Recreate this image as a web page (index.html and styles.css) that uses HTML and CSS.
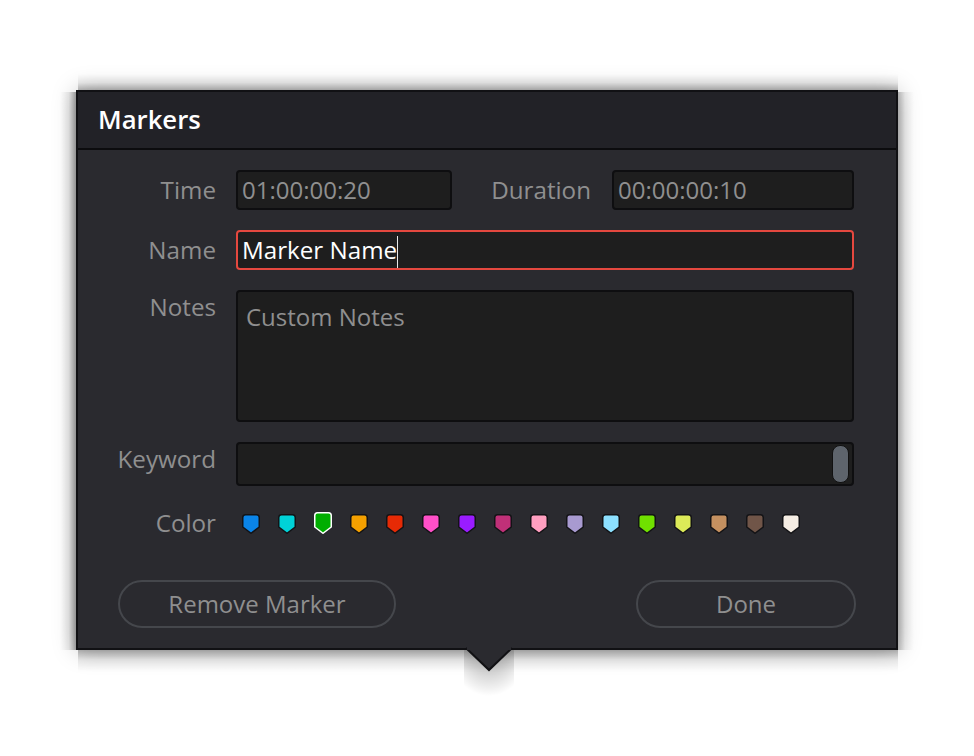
FILE: index.html
```html
<!DOCTYPE html>
<html lang="en">
<head>
<meta charset="UTF-8">
<meta name="viewport" content="width=device-width, initial-scale=1.0">
<title>Markers</title>
<link rel="stylesheet" href="styles.css">
</head>
<body>

<div class="shadow-box">
    <div class="dialog">
        <div class="dialog-title">Markers</div>
        <div class="dialog-body">
            <div class="row">
                <label class="row-label">Time</label>
                <div class="field field-time">01:00:00:20</div>
                <label class="duration-label">Duration</label>
                <div class="field field-duration">00:00:00:10</div>
            </div>
            <div class="row">
                <label class="row-label">Name</label>
                <div class="field field-active">Marker Name<span class="caret"></span></div>
            </div>
            <div class="row">
                <label class="row-label notes-label">Notes</label>
                <div class="field field-notes">Custom Notes</div>
            </div>
            <div class="row">
                <label class="row-label keyword-label">Keyword</label>
                <div class="field field-keyword"><span class="scroll-thumb"></span></div>
            </div>
            <div class="row color-row">
                <label class="row-label color-label">Color</label>
                <div class="swatches">
                    <svg class="swatch c-blue" viewBox="0 0 18 20"><path d="M3.5 .75H14.5Q17.25 .75 17.25 3.5V13L9 19.25L.75 13V3.5Q.75 .75 3.5 .75Z"/></svg>
                    <svg class="swatch c-cyan" viewBox="0 0 18 20"><path d="M3.5 .75H14.5Q17.25 .75 17.25 3.5V13L9 19.25L.75 13V3.5Q.75 .75 3.5 .75Z"/></svg>
                    <svg class="swatch c-green selected" viewBox="0 0 18 22"><path d="M3.5 .75H14.5Q17.25 .75 17.25 3.5V15L9 21.25L.75 15V3.5Q.75 .75 3.5 .75Z"/></svg>
                    <svg class="swatch c-orange" viewBox="0 0 18 20"><path d="M3.5 .75H14.5Q17.25 .75 17.25 3.5V13L9 19.25L.75 13V3.5Q.75 .75 3.5 .75Z"/></svg>
                    <svg class="swatch c-red" viewBox="0 0 18 20"><path d="M3.5 .75H14.5Q17.25 .75 17.25 3.5V13L9 19.25L.75 13V3.5Q.75 .75 3.5 .75Z"/></svg>
                    <svg class="swatch c-pink" viewBox="0 0 18 20"><path d="M3.5 .75H14.5Q17.25 .75 17.25 3.5V13L9 19.25L.75 13V3.5Q.75 .75 3.5 .75Z"/></svg>
                    <svg class="swatch c-purple" viewBox="0 0 18 20"><path d="M3.5 .75H14.5Q17.25 .75 17.25 3.5V13L9 19.25L.75 13V3.5Q.75 .75 3.5 .75Z"/></svg>
                    <svg class="swatch c-magenta" viewBox="0 0 18 20"><path d="M3.5 .75H14.5Q17.25 .75 17.25 3.5V13L9 19.25L.75 13V3.5Q.75 .75 3.5 .75Z"/></svg>
                    <svg class="swatch c-rose" viewBox="0 0 18 20"><path d="M3.5 .75H14.5Q17.25 .75 17.25 3.5V13L9 19.25L.75 13V3.5Q.75 .75 3.5 .75Z"/></svg>
                    <svg class="swatch c-lavender" viewBox="0 0 18 20"><path d="M3.5 .75H14.5Q17.25 .75 17.25 3.5V13L9 19.25L.75 13V3.5Q.75 .75 3.5 .75Z"/></svg>
                    <svg class="swatch c-sky" viewBox="0 0 18 20"><path d="M3.5 .75H14.5Q17.25 .75 17.25 3.5V13L9 19.25L.75 13V3.5Q.75 .75 3.5 .75Z"/></svg>
                    <svg class="swatch c-lime" viewBox="0 0 18 20"><path d="M3.5 .75H14.5Q17.25 .75 17.25 3.5V13L9 19.25L.75 13V3.5Q.75 .75 3.5 .75Z"/></svg>
                    <svg class="swatch c-yellow" viewBox="0 0 18 20"><path d="M3.5 .75H14.5Q17.25 .75 17.25 3.5V13L9 19.25L.75 13V3.5Q.75 .75 3.5 .75Z"/></svg>
                    <svg class="swatch c-tan" viewBox="0 0 18 20"><path d="M3.5 .75H14.5Q17.25 .75 17.25 3.5V13L9 19.25L.75 13V3.5Q.75 .75 3.5 .75Z"/></svg>
                    <svg class="swatch c-brown" viewBox="0 0 18 20"><path d="M3.5 .75H14.5Q17.25 .75 17.25 3.5V13L9 19.25L.75 13V3.5Q.75 .75 3.5 .75Z"/></svg>
                    <svg class="swatch c-cream" viewBox="0 0 18 20"><path d="M3.5 .75H14.5Q17.25 .75 17.25 3.5V13L9 19.25L.75 13V3.5Q.75 .75 3.5 .75Z"/></svg>
                </div>
            </div>
            <div class="buttons">
                <button class="btn btn-remove">Remove Marker</button>
                <button class="btn btn-done">Done</button>
            </div>
        </div>
        <svg class="arrow" viewBox="0 0 50 24"><path d="M2 -1L25 21L48 -1" fill="#2a2a2f" stroke="#111114" stroke-width="2"/><path d="M3 1H47V-3H3Z" fill="#2a2a2f"/></svg>
    </div>
</div>

</body>
</html>
```

FILE: styles.css
```css
body {
    font-family: "Open Sans", "Noto Sans", sans-serif;
    margin: 0;
    padding: 0;
    background-color: #fff;
}

/* darker strips along each edge, one more under the arrow; the soft corners come from the dialog's box-shadow */
.shadow-box {
    width: 822px;
    margin: 70px 0 0 56px;
    padding: 20px 20px 56px;
    background-image:
        radial-gradient(ellipse 40px 46px at 50% 0, rgba(0, 0, 0, 0.3), rgba(0, 0, 0, 0.17) 50%, rgba(0, 0, 0, 0)),
        linear-gradient(to top, rgba(0, 0, 0, 0.26), rgba(0, 0, 0, 0.07) 45%, rgba(0, 0, 0, 0)),
        linear-gradient(to left, rgba(0, 0, 0, 0.34), rgba(0, 0, 0, 0.08) 45%, rgba(0, 0, 0, 0)),
        linear-gradient(to right, rgba(0, 0, 0, 0.24), rgba(0, 0, 0, 0.06) 45%, rgba(0, 0, 0, 0)),
        linear-gradient(to bottom, rgba(0, 0, 0, 0.28), rgba(0, 0, 0, 0.08) 45%, rgba(0, 0, 0, 0));
    background-repeat: no-repeat;
    background-size: 50px 50px, 820px 16px, 16px 558px, 16px 558px, 820px 22px;
    background-position: 408px 580px, 22px 4px, 4px 22px, 842px 22px, 22px 580px;
}

.dialog {
    position: relative;
    box-sizing: border-box;
    width: 822px;
    height: 560px;
    background-color: #2a2a2f;
    border: 2px solid #111114;
    box-shadow: 0 0 22px rgba(0, 0, 0, 0.26);
}

.dialog-title {
    box-sizing: border-box;
    height: 58px;
    padding-left: 20px;
    line-height: 56px;
    font-size: 25.7px;
    font-weight: 600;
    color: #fff;
    background-color: #222227;
    border-bottom: 2px solid #0c0c0e;
}

.dialog-body {
    padding: 20px 42px 0 0;
}

.row {
    display: flex;
    margin-bottom: 20px;
}

.row-label {
    width: 138px;
    margin-right: 20px;
    text-align: right;
    font-size: 24.2px;
    line-height: 40px;
    color: #8f8f8f;
    flex-shrink: 0;
}

.duration-label {
    width: 139px;
    margin-right: 21px;
    text-align: right;
    font-size: 24.2px;
    line-height: 40px;
    color: #8f8f8f;
}

.notes-label {
    line-height: 34px;
}

.keyword-label {
    line-height: 34px;
}

.color-label {
    line-height: 34px;
}

.field {
    box-sizing: border-box;
    flex: 1;
    height: 40px;
    padding-left: 4px;
    font-size: 24px;
    line-height: 36px;
    color: #8f8f8f;
    background-color: #1e1e1e;
    border: 2px solid #0e0e10;
    border-radius: 4px;
}

.field-time {
    flex: none;
    width: 216px;
}

.field-duration {
    flex: none;
    width: 242px;
}

.field-active {
    font-size: 24.2px;
    color: #fff;
    border-color: #e5483f;
}

.caret {
    display: inline-block;
    width: 1px;
    height: 32px;
    vertical-align: -9px;
    background-color: #e8e8e8;
}

.field-notes {
    height: 132px;
    padding: 7px 0 0 8px;
}

.field-keyword {
    display: flex;
    justify-content: flex-end;
    height: 44px;
    padding: 0 3px 0 0;
}

.scroll-thumb {
    width: 17px;
    height: 38px;
    margin-top: 1px;
    box-sizing: border-box;
    background-color: #5e646c;
    border: 1px solid #111;
    border-radius: 8px;
}

.color-row {
    height: 74px;
    margin-bottom: 0;
}

.swatches {
    display: flex;
    align-items: flex-start;
    gap: 18px;
    padding: 8px 0 0 6px;
}

.swatch {
    width: 18px;
    height: 20px;
    stroke: #131316;
    stroke-width: 1.5;
}

.swatch.selected {
    height: 22px;
    margin-top: -2px;
    stroke: #fff;
}

.c-blue { fill: #0a84e8; }
.c-cyan { fill: #00d2d8; }
.c-green { fill: #00ae00; }
.c-orange { fill: #f4a000; }
.c-red { fill: #e62a05; }
.c-pink { fill: #ff4fc8; }
.c-purple { fill: #9a1cff; }
.c-magenta { fill: #c03078; }
.c-rose { fill: #ff9fc0; }
.c-lavender { fill: #a89ad0; }
.c-sky { fill: #8ce0ff; }
.c-lime { fill: #70e000; }
.c-yellow { fill: #dcea58; }
.c-tan { fill: #c49060; }
.c-brown { fill: #705548; }
.c-cream { fill: #f5ede4; }

.buttons {
    display: flex;
    justify-content: space-between;
    padding-left: 40px;
    margin-right: -2px;
}

.btn {
    height: 48px;
    padding: 0 0 2px;
    font-family: inherit;
    font-size: 24px;
    color: #8f8f8f;
    background: transparent;
    border: 2px solid #45474c;
    border-radius: 24px;
    cursor: pointer;
}

.btn-remove {
    width: 278px;
}

.btn-done {
    width: 220px;
}

.arrow {
    position: absolute;
    left: 386px;
    bottom: -25px;
    width: 50px;
    height: 24px;
    overflow: visible;
}
```
